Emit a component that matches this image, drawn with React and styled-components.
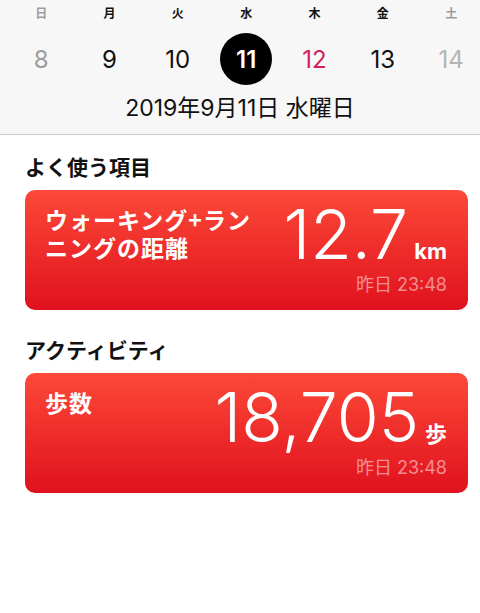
import React from 'react';
import styled, { createGlobalStyle } from 'styled-components';

const WEEK = [
  { label: '日', day: 8, tone: 'muted' },
  { label: '月', day: 9 },
  { label: '火', day: 10 },
  { label: '水', day: 11, selected: true },
  { label: '木', day: 12, tone: 'today' },
  { label: '金', day: 13 },
  { label: '土', day: 14, tone: 'faint' },
];

const DAY_COLORS = {
  muted: '#9d9d9d',
  faint: '#b4b4b4',
  today: '#d0245b',
};

const SECTIONS = [
  {
    heading: 'よく使う項目',
    title: 'ウォーキング+ランニングの距離',
    value: '12.7',
    unit: 'km',
    time: '昨日 23:48',
  },
  {
    heading: 'アクティビティ',
    title: '歩数',
    value: '18,705',
    unit: '歩',
    time: '昨日 23:48',
  },
];

const App = () => {
  return (
    <>
      <GlobalStyle />
      <Page>
        <Header>
          <WeekRow>
            {WEEK.map((d) => (
              <WeekLabel key={d.label} muted={!!d.tone && d.tone !== 'today'}>
                {d.label}
              </WeekLabel>
            ))}
          </WeekRow>
          <DayRow>
            {WEEK.map((d) => (
              <DayCell key={d.day}>
                <Day selected={d.selected} tone={d.tone}>
                  {d.day}
                </Day>
              </DayCell>
            ))}
          </DayRow>
          <DateLine>2019年9月11日 水曜日</DateLine>
        </Header>

        <Content>
          {SECTIONS.map((s) => (
            <Section key={s.heading}>
              <Heading>{s.heading}</Heading>
              <Card>
                <CardTitle>{s.title}</CardTitle>
                <CardSide>
                  <ValueLine>
                    <Value>{s.value}</Value>
                    <Unit>{s.unit}</Unit>
                  </ValueLine>
                  <Time>{s.time}</Time>
                </CardSide>
              </Card>
            </Section>
          ))}
        </Content>
      </Page>
    </>
  );
};

export default App;

const GlobalStyle = createGlobalStyle`
  html, body {
    margin: 0;
    padding: 0;
    background: #ffffff;
  }
  body {
    font-family: "Inter", "Noto Sans CJK JP", sans-serif;
    -webkit-font-smoothing: antialiased;
  }
`;

const Page = styled.div`
  width: 480px;
  min-height: 613px;
  background: #ffffff;
`;

const Header = styled.header`
  background: #f7f7f7;
  border-bottom: 1px solid #c9c9c9;
  height: 135px;
  box-sizing: border-box;
`;

const WeekRow = styled.div`
  display: grid;
  grid-template-columns: repeat(7, 68.33px);
  padding-left: 7px;
  height: 24px;
  align-items: center;
`;

const WeekLabel = styled.div`
  text-align: center;
  font-family: "Noto Sans CJK JP", sans-serif;
  font-size: 12px;
  font-weight: 700;
  color: ${(p) => (p.muted ? '#9d9d9d' : '#111')};
`;

const DayRow = styled.div`
  display: grid;
  grid-template-columns: repeat(7, 68.33px);
  padding-left: 7px;
  margin-top: 9px;
  height: 52px;
`;

const DayCell = styled.div`
  display: flex;
  justify-content: center;
  align-items: center;
`;

const Day = styled.div`
  width: 52px;
  height: 52px;
  border-radius: 50%;
  display: flex;
  align-items: center;
  justify-content: center;
  font-size: 24px;
  font-weight: ${(p) => (p.selected ? 600 : 400)};
  background: ${(p) => (p.selected ? '#000' : 'transparent')};
  color: ${(p) => (p.selected ? '#fff' : DAY_COLORS[p.tone] || '#111')};
`;

const DateLine = styled.div`
  margin-top: 10px;
  text-align: center;
  font-size: 23px;
  line-height: 26px;
  color: #111;
`;

const Content = styled.main`
  padding: 18px 12px 0 25px;
  display: flex;
  flex-direction: column;
  gap: 26px;
`;

const Section = styled.section`
  display: flex;
  flex-direction: column;
  gap: 11px;
`;

const Heading = styled.h2`
  margin: 0;
  font-family: "Noto Sans CJK JP", sans-serif;
  font-size: 21px;
  line-height: 26px;
  font-weight: 700;
  color: #111;
`;

const Card = styled.div`
  height: 120px;
  box-sizing: border-box;
  border-radius: 10px;
  background: linear-gradient(180deg, #fc4938 0%, #e0111e 100%);
  color: #fff;
  display: flex;
  justify-content: space-between;
  padding: 15px 21px 0 20px;
`;

const CardTitle = styled.div`
  width: 215px;
  font-family: "Noto Sans CJK JP", sans-serif;
  font-size: 23px;
  line-height: 28px;
  font-weight: 700;
  letter-spacing: 1px;
`;

const CardSide = styled.div`
  display: flex;
  flex-direction: column;
  align-items: flex-end;
`;

const ValueLine = styled.div`
  display: flex;
  align-items: baseline;
  gap: 6px;
  height: 62px;
  margin-top: -7px;
`;

const Value = styled.span`
  font-family: "Inter", "Roboto", sans-serif;
  font-size: 68px;
  font-weight: 300;
  line-height: 72px;
  letter-spacing: 0;
`;

const Unit = styled.span`
  font-family: "Inter", "Noto Sans CJK JP", sans-serif;
  font-size: 22px;
  font-weight: 700;
`;

const Time = styled.div`
  margin-top: 14px;
  font-size: 18px;
  line-height: 22px;
  color: rgba(255, 255, 255, 0.5);
`;
